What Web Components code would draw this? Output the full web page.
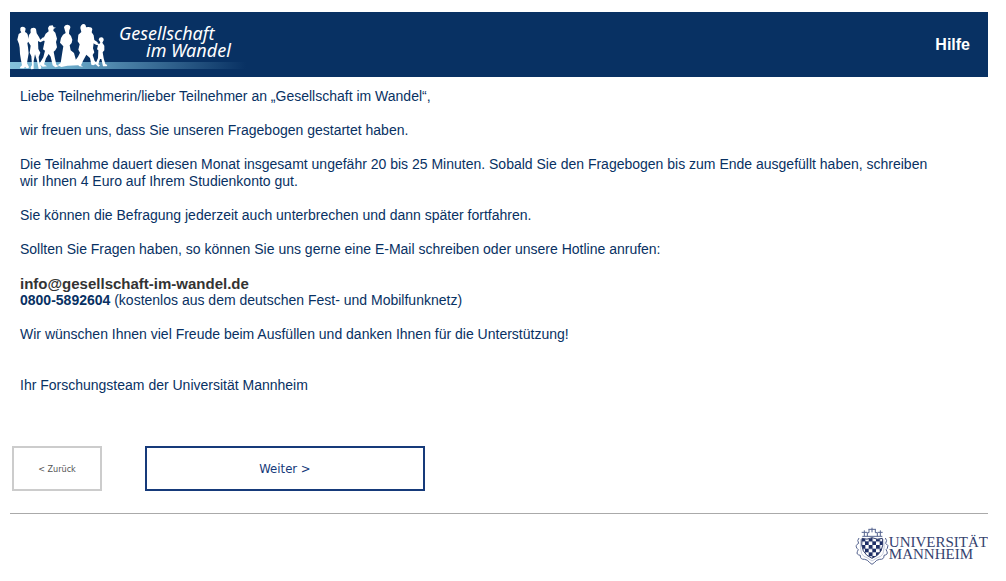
<!DOCTYPE html>
<html lang="de">
<head>
<meta charset="utf-8">
<title>Gesellschaft im Wandel</title>
<style>
  body { margin: 12px 18px 12px 10px; background: #fff; color: #083163; font: 14px/17px "Liberation Sans", Arial, sans-serif; }
</style>
</head>
<body>
<survey-page></survey-page>

<template id="tpl-header">
  <style>
    :host { display: block; background: #083163; color: #fff; }
    header { display: grid; grid-template-columns: 106px 1fr auto; height: 65px; padding-right: 18px; align-items: center;
      background: linear-gradient(90deg, #84c2dc 0, #6aa9c9 60px, #4b82a8 110px, #083163 236px) 0 50px / 240px 7px no-repeat; }
    svg { display: block; width: 100px; height: 65px; }
    .name { align-self: start; margin: 0; padding: 13px 0 0 3px; font: italic 18px/17px "Noto Sans", "Open Sans", sans-serif; }
    .name span { display: block; }
    .name span + span { padding-left: 27px; }
    a { color: #fff; font-weight: bold; font-size: 16px; line-height: 18px; text-decoration: none; }
  </style>
  <header>
    <svg viewBox="30 36 300 195" fill="#fff" aria-hidden="true">
      <path d="M61 92V84Q63 80 69 80Q76 81 77 86L75 96Q84 100 84 110L87 124L82 129L84 142L86 160L83 177L81 190L87 201Q87 205 80 205L75 200L72 205H61L60 202L66 196L63 181L60 162L59 143L57 132L52 119L56 102L64 97Z"/>
      <path d="M92 98Q90 88 94 85Q103 81 108 87L110 100L117 111L121 119L130 111L135 120L121 127L114 123L115 147L121 158L116 171L118 189L124 201L123 206L116 207L111 182L105 163L101 184L101 207L93 208L92 202L96 195L94 169L89 158L92 137L83 122L87 105Z"/>
      <path d="M144 84L148 77L158 76L161 82L168 83L161 86L160 92L166 98L171 116L168 126L171 142L166 151L161 155L165 176L169 194L176 199L166 202L158 196L152 170L146 162L138 175L132 193L141 199L128 200L118 192L130 172L135 152L129 148L134 124L129 118L137 101L146 94Z"/>
      <path d="M192 82Q193 75 203 74Q212 76 211 83L208 91L207 101L213 108L217 119L215 129L209 136L212 151L222 159L228 181L238 190L235 196L202 197L184 201L173 196L182 189L187 157L190 139L180 128L183 114L189 104L197 99Z"/>
      <path d="M241 84Q242 73 251 72Q258 73 258 82L265 81Q276 81 277 88L275 97L281 106L283 120L293 127L292 135L281 130L279 145L283 157L278 165L284 183L292 190L280 196L274 194L270 174L259 164L250 181L243 196L249 200L238 199L229 190L222 193L221 188L234 170L240 158L235 149L239 133L233 124L235 104L244 96Z"/>
      <path d="M296 119Q297 112 304 112Q312 113 311 121L307 128L313 137L313 151L308 157L311 175L316 192L322 195L320 199L309 199L304 177L300 177L295 193L300 197L295 200L286 192L294 174L295 151L291 148L294 136L283 132L283 126L298 132L301 127Z"/>
    </svg>
    <p class="name"><span>Gesellschaft</span><span>im Wandel</span></p>
    <a href="#hilfe">Hilfe</a>
  </header>
</template>

<template id="tpl-intro">
  <style>
    :host { display: block; padding: 11px 40px 0 10px; }
    ::slotted(p) { margin: 0 0 17px; }
    ::slotted(p.closing) { margin-top: 34px; }
  </style>
  <slot></slot>
</template>

<template id="tpl-button">
  <style>
    :host { display: block; width: 90px; }
    :host([primary]) { width: 280px; }
    button { display: block; box-sizing: border-box; width: 100%; height: 45px; margin: 0; padding: 0; border: 2px solid #ccc; border-radius: 0; background: #fff; color: #555; font: 9px/12px "DejaVu Sans Condensed", "DejaVu Sans", sans-serif; cursor: pointer; }
    :host([primary]) button { border-color: #163a7a; color: #163a7a; font-size: 13px; line-height: 16px; }
  </style>
  <button type="button"><slot></slot></button>
</template>

<template id="tpl-footer">
  <style>
    :host { display: block; margin-top: 22px; border-top: 1px solid #aaa; }
    footer { display: flex; justify-content: flex-end; align-items: flex-start; padding-top: 12px; color: #35426f; }
    svg { display: block; width: 34px; height: 40px; }
    p { margin: 0; padding-top: 10px; font: 15px/12px "Liberation Serif", serif; }
    span { display: block; }
  </style>
  <footer>
    <svg viewBox="50 63 102 120" fill="none" stroke="#55638f" stroke-width="3" aria-hidden="true">
      <defs>
        <pattern id="checks" x="69" y="98" width="22" height="22" patternUnits="userSpaceOnUse">
          <path d="M0 0H12V12H0ZM11 11H23V23H11Z" fill="#1f2f66" stroke="none"/>
        </pattern>
      </defs>
      <path d="M70 82H86M78 76V93M90 73H113M101 68V82M118 82H133M126 76V93M92 74V83H87V94M111 74V83H117V94M72 94H132"/>
      <path d="M62 99Q55 106 61 115Q49 121 56 130Q63 133 57 140Q53 149 66 151Q65 164 79 163Q88 164 93 172L101 178L109 172Q114 164 124 163Q138 164 137 151Q150 149 146 140Q140 133 147 130Q153 121 142 115Q148 106 141 99"/>
      <path d="M67 102Q64 130 70 146Q75 156 86 158L101 168L117 158Q129 156 134 146Q140 130 136 102" stroke="#a7afc8" stroke-width="2"/>
      <path d="M71 100Q86 106 101 98Q117 106 132 100Q140 145 101 160Q64 145 71 100Z" fill="url(#checks)" stroke="#35426f" stroke-width="3"/>
    </svg>
    <p><span>UNIVERSITÄT</span><span>MANNHEIM</span></p>
  </footer>
</template>

<template id="tpl-page">
  <style>
    :host { display: block; }
    a { color: #333; font-size: 15px; font-weight: bold; text-decoration: none; vertical-align: top; }
    nav { display: flex; gap: 43px; margin-top: 52px; padding-left: 2px; }
  </style>
  <survey-header></survey-header>
  <main>
    <survey-intro>
      <p>Liebe Teilnehmerin/lieber Teilnehmer an „Gesellschaft im Wandel“,</p>
      <p>wir freuen uns, dass Sie unseren Fragebogen gestartet haben.</p>
      <p>Die Teilnahme dauert diesen Monat insgesamt ungefähr 20 bis 25 Minuten. Sobald Sie den Fragebogen bis zum Ende ausgefüllt haben, schreiben wir Ihnen 4 Euro auf Ihrem Studienkonto gut.</p>
      <p>Sie können die Befragung jederzeit auch unterbrechen und dann später fortfahren.</p>
      <p>Sollten Sie Fragen haben, so können Sie uns gerne eine E-Mail schreiben oder unsere Hotline anrufen:</p>
      <p><a href="mailto:info@gesellschaft-im-wandel.de">info@gesellschaft-im-wandel.de</a><br><b>0800-5892604</b> (kostenlos aus dem deutschen Fest- und Mobilfunknetz)</p>
      <p>Wir wünschen Ihnen viel Freude beim Ausfüllen und danken Ihnen für die Unterstützung!</p>
      <p class="closing">Ihr Forschungsteam der Universität Mannheim</p>
    </survey-intro>
    <nav aria-label="Navigation">
      <survey-button>&lt; Zurück</survey-button>
      <survey-button primary>Weiter &gt;</survey-button>
    </nav>
  </main>
  <survey-footer></survey-footer>
</template>

<script>
  class TemplateElement extends HTMLElement {
    constructor() {
      super();
      const template = document.getElementById(this.constructor.template);
      this.attachShadow({ mode: "open" }).append(template.content.cloneNode(true));
    }
  }
  customElements.define("survey-header", class extends TemplateElement { static template = "tpl-header"; });
  customElements.define("survey-intro", class extends TemplateElement { static template = "tpl-intro"; });
  customElements.define("survey-button", class extends TemplateElement { static template = "tpl-button"; });
  customElements.define("survey-footer", class extends TemplateElement { static template = "tpl-footer"; });
  customElements.define("survey-page", class extends TemplateElement { static template = "tpl-page"; });
</script>
</body>
</html>
